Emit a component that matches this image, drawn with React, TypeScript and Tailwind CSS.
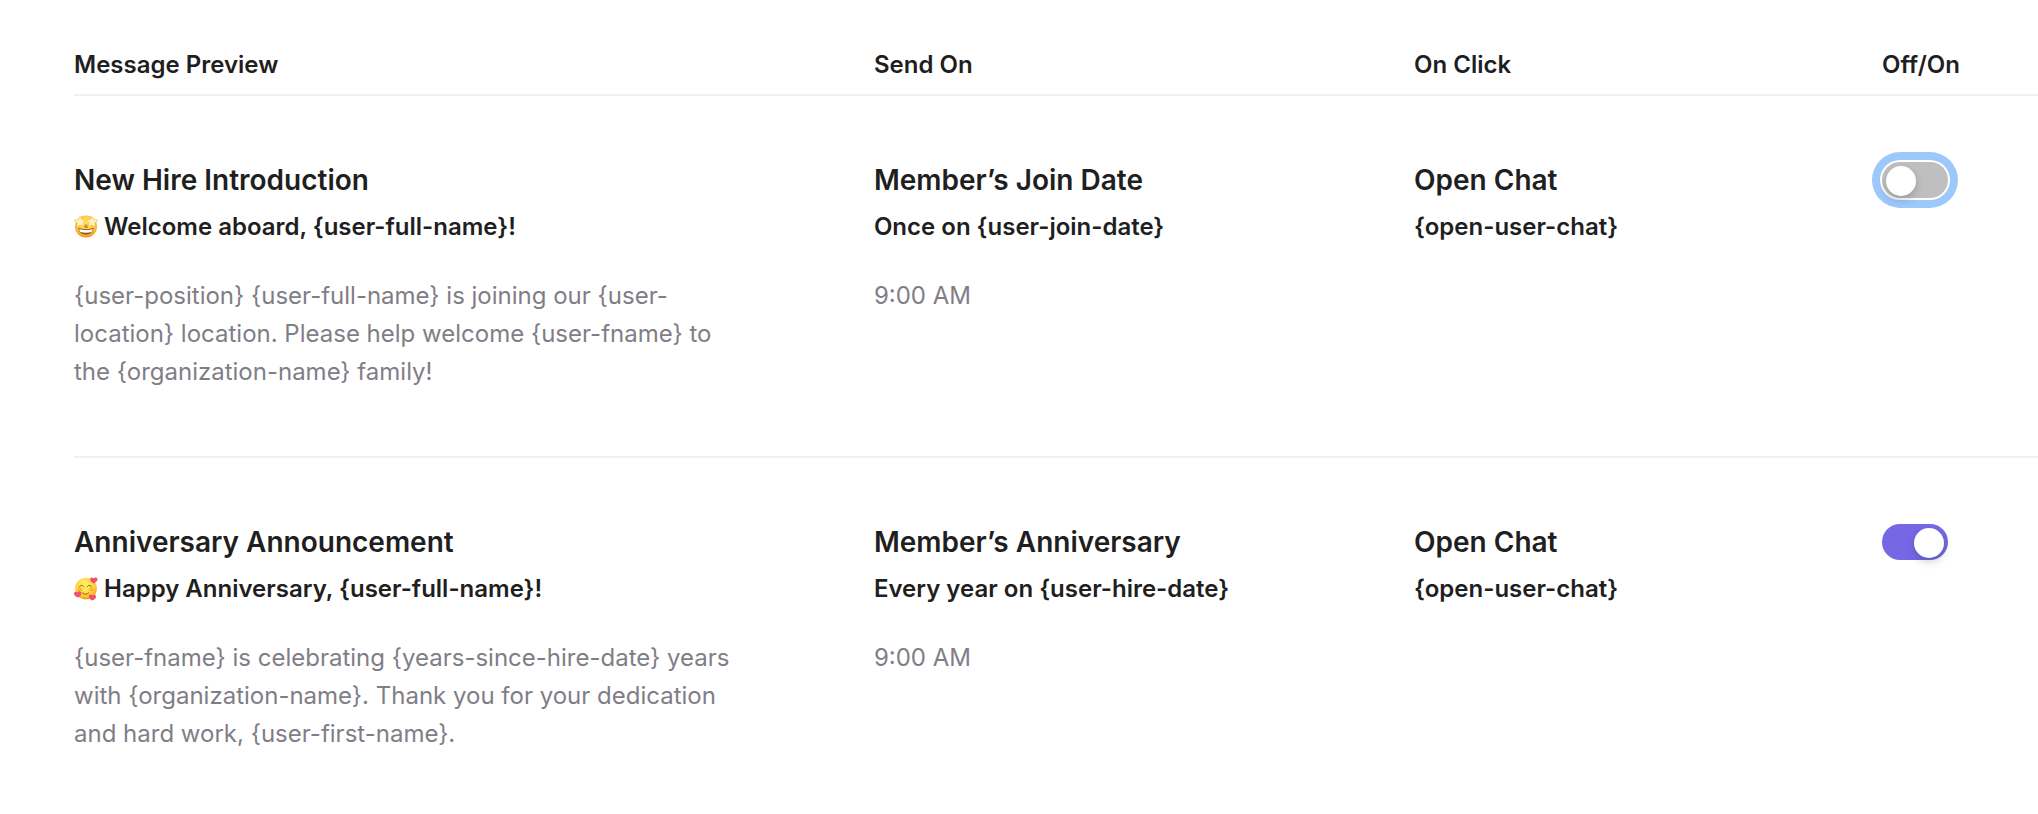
import { useState } from 'react';
import type { ReactNode } from 'react';

function StarStruckIcon() {
  return (
    <svg viewBox="0 0 24 24" className="size-6 shrink-0" role="img" aria-label="Star-struck">
      <defs>
        <radialGradient id="star-face" cx="0.5" cy="0.4" r="0.6">
          <stop offset="0.4" stopColor="#ffdc55" />
          <stop offset="0.85" stopColor="#f9b233" />
          <stop offset="1" stopColor="#e98a14" />
        </radialGradient>
      </defs>
      <circle cx="12" cy="11.5" r="11" fill="url(#star-face)" />
      <path d="M10.800 9.500h2.400l.8 3.500h-4z" fill="#d98a1c" />
      <path d="M4.500 12.800c2.300.9 4.800 1.200 7.500 1.200s5.200-.3 7.500-1.200c0 4.400-3.200 6.900-7.500 6.900s-7.500-2.500-7.500-6.900z" fill="#9a5a1c" />
      <path d="M5.200 13.900c2.100.8 4.400 1.100 6.800 1.100s4.700-.3 6.800-1.100c-.2 1.300-.6 2.300-1.300 3.100-3.500.9-7.500.9-11 0-.7-.8-1.100-1.800-1.300-3.100z" fill="#fff" />
      <path d="M6.100 1.300l1.600 3.300 4 .3-2.700 3 1 3.900-3.600-1.700L2.700 12l.5-4L0 5.100l4.200-.5z" fill="#fff1bd" stroke="#efb03c" strokeWidth="0.5" strokeLinejoin="round" />
      <path d="M17.900 1.300l-1.600 3.300-4 .3 2.700 3-1 3.900 3.600-1.700 3.700 1.900-.5-4L24 5.100l-4.200-.5z" fill="#fff1bd" stroke="#efb03c" strokeWidth="0.5" strokeLinejoin="round" />
    </svg>
  );
}

function HeartsIcon() {
  return (
    <svg viewBox="0 0 24 24" className="size-6 shrink-0" role="img" aria-label="Smiling face with hearts">
      <defs>
        <radialGradient id="hearts-face" cx="0.45" cy="0.35" r="0.65">
          <stop offset="0.3" stopColor="#ffe95c" />
          <stop offset="0.8" stopColor="#fcc531" />
          <stop offset="1" stopColor="#ee961c" />
        </radialGradient>
      </defs>
      <circle cx="12" cy="11.5" r="10.800" fill="url(#hearts-face)" />
      <ellipse cx="6" cy="12.500" rx="2.400" ry="1.700" fill="#fa9a3c" opacity="0.6" />
      <ellipse cx="17.500" cy="12.500" rx="2.400" ry="1.700" fill="#fa9a3c" opacity="0.6" />
      <path d="M5.600 9.800c.7-2.100 3.300-2.100 4 0M13.400 9.800c.7-2.100 3.300-2.100 4 0M8.400 15.800c1.700 2 4.600 2 6.300 0" fill="none" stroke="#8a5a1c" strokeWidth="1" strokeLinecap="round" />
      <path d="M19.600 6.400c-2.300-1.300-3.800-2.900-3.300-4.700.5-1.700 2.700-1.600 3.400-.1.800-1.500 3.100-1.500 3.700.1.600 1.900-1.400 3.600-3.800 4.700z" fill="#f0506a" />
      <path d="M4.600 20.500c-2.700-.6-4.700-2.100-4.600-4.100.2-1.900 2.500-2.200 3.500-.8.500-1.700 2.800-2 3.600-.4.800 1.900-.5 3.900-2.500 5.300z" fill="#f0506a" />
      <path d="M18 23.600c-2.300-1.300-3.700-3.200-3-5 .7-1.600 2.800-1.400 3.500.1.900-1.400 3.200-1.200 3.600.6.400 1.900-1.600 3.500-4.100 4.300z" fill="#f0506a" />
    </svg>
  );
}

type Message = {
  id: string;
  title: string;
  icon: ReactNode;
  greeting: string;
  body: string;
  trigger: string;
  schedule: string;
  time: string;
  action: string;
  target: string;
  enabled: boolean;
};

const MESSAGES: Message[] = [
  {
    id: 'new-hire',
    title: 'New Hire Introduction',
    icon: <StarStruckIcon />,
    greeting: 'Welcome aboard, {user-full-name}!',
    body: '{user-position} {user-full-name} is joining our {user-location} location. Please help welcome {user-fname} to the {organization-name} family!',
    trigger: 'Member’s Join Date',
    schedule: 'Once on {user-join-date}',
    time: '9:00 AM',
    action: 'Open Chat',
    target: '{open-user-chat}',
    enabled: false,
  },
  {
    id: 'anniversary',
    title: 'Anniversary Announcement',
    icon: <HeartsIcon />,
    greeting: 'Happy Anniversary, {user-full-name}!',
    body: '{user-fname} is celebrating {years-since-hire-date} years with {organization-name}. Thank you for your dedication and hard work, {user-first-name}.',
    trigger: 'Member’s Anniversary',
    schedule: 'Every year on {user-hire-date}',
    time: '9:00 AM',
    action: 'Open Chat',
    target: '{open-user-chat}',
    enabled: true,
  },
];

type ToggleProps = {
  label: string;
  checked: boolean;
  autoFocus?: boolean;
  onChange: (checked: boolean) => void;
};

function Toggle({ label, checked, autoFocus, onChange }: ToggleProps) {
  return (
    <input
      type="checkbox"
      role="switch"
      aria-label={label}
      checked={checked}
      autoFocus={autoFocus}
      onChange={(e) => onChange(e.target.checked)}
      className="block h-9 w-[66px] cursor-pointer appearance-none rounded-full bg-[#bfbfbf] px-1 pt-1 outline-none before:block before:size-[30px] before:rounded-full before:bg-white before:shadow-[0_4px_8px_rgba(0,35,11,0.2)] checked:bg-[#7668e5] checked:before:ml-7 focus:ring-8 focus:ring-[#9cc8fa] focus:ring-offset-2"
    />
  );
}

function CellHeading({ title, subtitle, icon }: { title: string; subtitle: string; icon?: ReactNode }) {
  return (
    <>
      <h3 className="text-[28px] leading-10 font-semibold">{title}</h3>
      <p className="mt-2 flex items-center gap-1.5 text-2xl leading-[38px] font-semibold">
        {icon}
        {subtitle}
      </p>
    </>
  );
}

export default function App() {
  const [enabled, setEnabled] = useState<Record<string, boolean>>(
    Object.fromEntries(MESSAGES.map((m) => [m.id, m.enabled])),
  );

  return (
    <main className="min-h-screen overflow-x-hidden bg-white pt-[45px] pl-[74px] font-['Inter',sans-serif] text-[#1f1f1f]">
      <table className="w-full table-fixed text-left">
        <colgroup>
          <col className="w-[40.73%]" />
          <col className="w-[27.5%]" />
          <col className="w-[23.83%]" />
          <col />
        </colgroup>
        <thead>
          <tr className="border-b-2 border-[#f0f0f0] text-2xl leading-10">
            <th className="pb-[9px] font-semibold">Message Preview</th>
            <th className="pb-[9px] font-semibold">Send On</th>
            <th className="pb-[9px] font-semibold">On Click</th>
            <th className="pb-[9px] font-semibold">Off/On</th>
          </tr>
        </thead>
        <tbody>
          {MESSAGES.map((m, i) => (
            <tr key={m.id} className="border-b-2 border-[#f0f0f0] align-top last:border-b-0">
              <td className="pt-16 pb-[65px]">
                <CellHeading title={m.title} subtitle={m.greeting} icon={m.icon} />
                <p className="mt-[31px] max-w-[660px] text-2xl leading-[38px] text-[#7f7e87]">{m.body}</p>
              </td>
              <td className="pt-16">
                <CellHeading title={m.trigger} subtitle={m.schedule} />
                <p className="mt-[31px] text-2xl leading-[38px] text-[#7f7e87]">{m.time}</p>
              </td>
              <td className="pt-16">
                <CellHeading title={m.action} subtitle={m.target} />
              </td>
              <td className="pt-[66px]">
                <Toggle
                  label={`Turn ${m.title} on or off`}
                  checked={enabled[m.id]}
                  autoFocus={i === 0}
                  onChange={(on) => setEnabled({ ...enabled, [m.id]: on })}
                />
              </td>
            </tr>
          ))}
        </tbody>
      </table>
    </main>
  );
}
